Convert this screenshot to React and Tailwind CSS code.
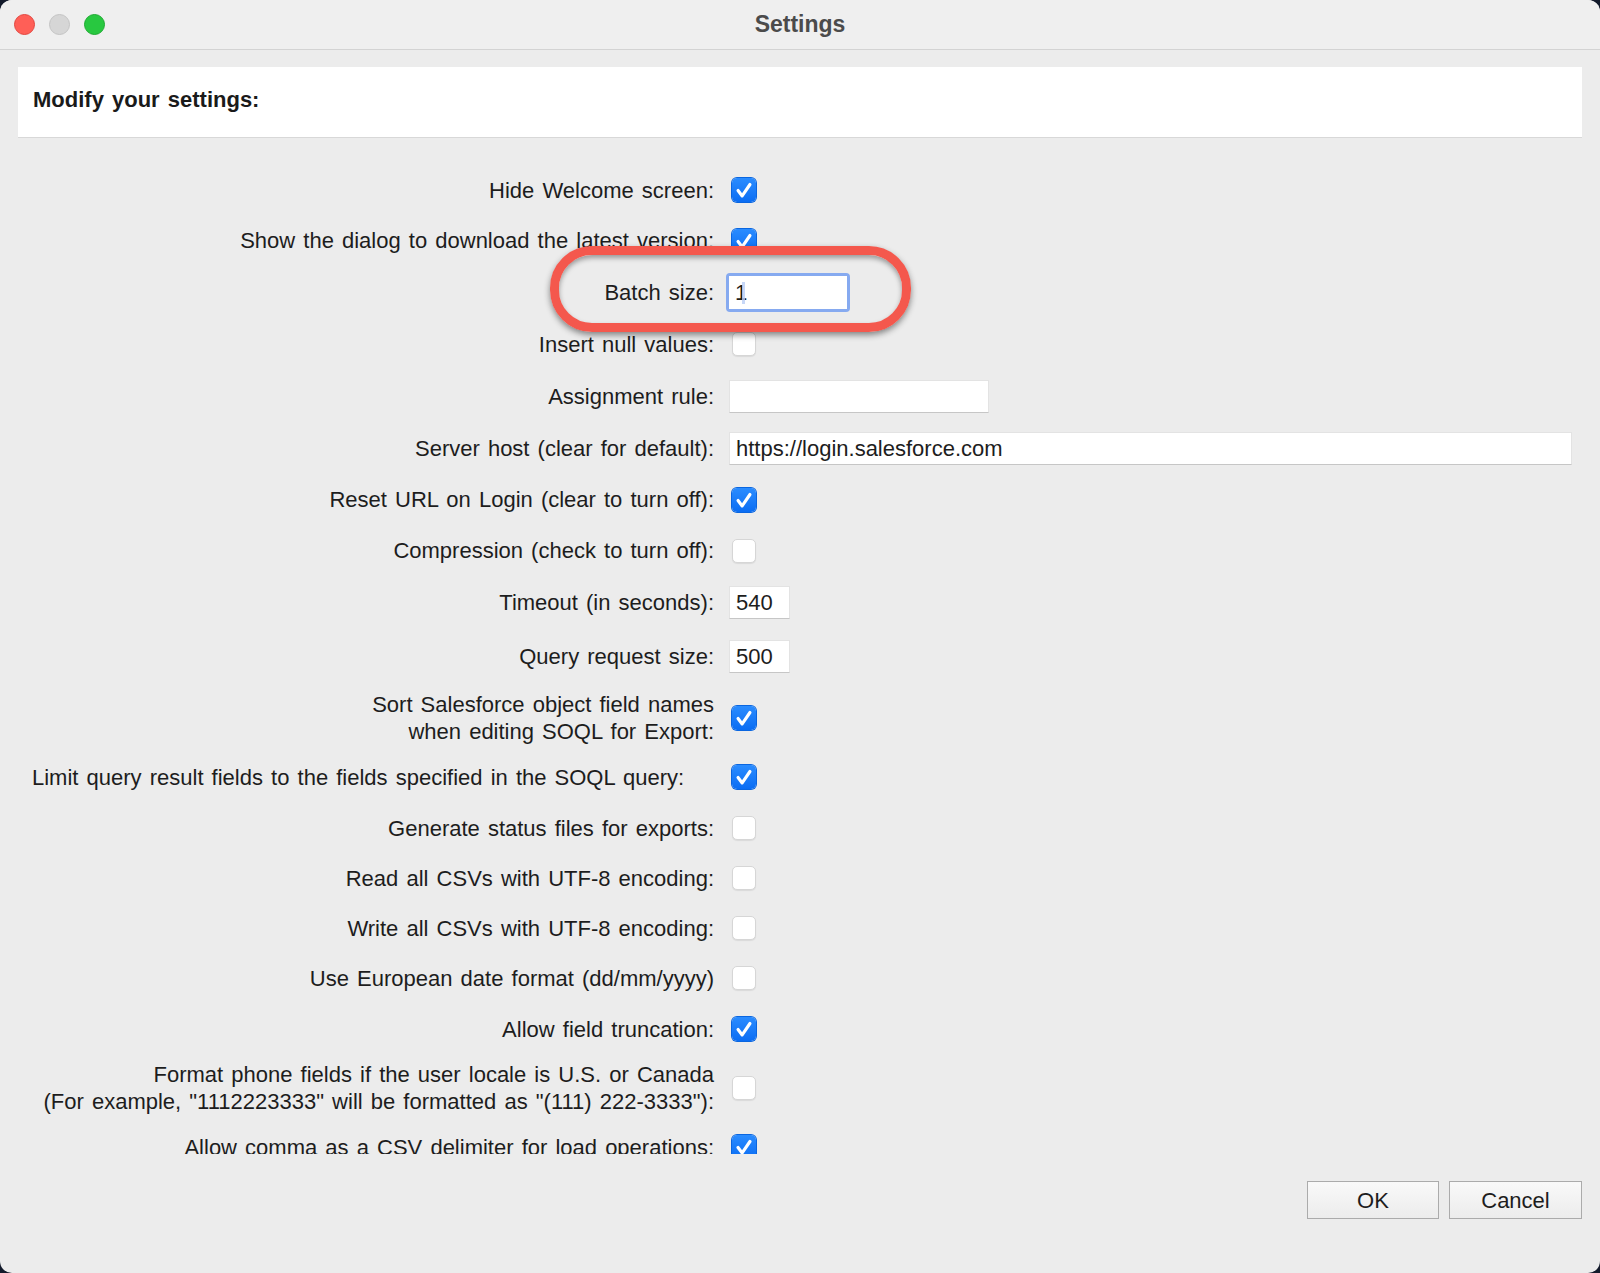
// Settings dialog - macOS style window with a form of options

const rows = [
  { label: 'Hide Welcome screen:', type: 'check', checked: true, h: 'h-[50px]' },
  { label: 'Show the dialog to download the latest version:', type: 'check', checked: true, h: 'h-[51px]' },
  { label: 'Batch size:', type: 'input', value: '1', w: 'w-[118px]', focus: true, h: 'h-[52px]' },
  { label: 'Insert null values:', type: 'check', checked: false, h: 'h-[52px]' },
  { label: 'Assignment rule:', type: 'input', value: '', w: 'w-[260px]', h: 'h-[52px]' },
  { label: 'Server host (clear for default):', type: 'input', value: 'https://login.salesforce.com', w: 'flex-1', h: 'h-[52px]' },
  { label: 'Reset URL on Login (clear to turn off):', type: 'check', checked: true, h: 'h-[51px]' },
  { label: 'Compression (check to turn off):', type: 'check', checked: false, h: 'h-[51px]' },
  { label: 'Timeout (in seconds):', type: 'input', value: '540', w: 'w-[61px]', h: 'h-[52px]' },
  { label: 'Query request size:', type: 'input', value: '500', w: 'w-[61px]', h: 'h-[57px]' },
  { label: ['Sort Salesforce object field names', 'when editing SOQL for Export:'], type: 'check', checked: true, h: 'h-[66px]' },
  { label: 'Limit query result fields to the fields specified in the SOQL query:', type: 'check', checked: true, h: 'h-[52px]', left: true },
  { label: 'Generate status files for exports:', type: 'check', checked: false, h: 'h-[50px]' },
  { label: 'Read all CSVs with UTF-8 encoding:', type: 'check', checked: false, h: 'h-[50px]' },
  { label: 'Write all CSVs with UTF-8 encoding:', type: 'check', checked: false, h: 'h-[50px]' },
  { label: 'Use European date format (dd/mm/yyyy)', type: 'check', checked: false, h: 'h-[50px]' },
  { label: 'Allow field truncation:', type: 'check', checked: true, h: 'h-[52px]' },
  { label: ['Format phone fields if the user locale is U.S. or Canada', '(For example, "1112223333" will be formatted as "(111) 222-3333"):'], type: 'check', checked: false, h: 'h-[66px]' },
  { label: 'Allow comma as a CSV delimiter for load operations:', type: 'check', checked: true, h: 'h-[52px]' },
];

function Checkbox({ checked }) {
  if (checked) {
    return (
      <div className="ml-[3px] w-[24px] h-[24px] rounded-[5px] bg-gradient-to-b from-[#2a8cff] to-[#0a6df3] shadow-[0_0_0_1px_#0a66e0] flex items-center justify-center">
        <svg className="w-[22px] h-[22px]" viewBox="0 0 24 24" fill="none" stroke="white" strokeWidth="3.4" strokeLinecap="round" strokeLinejoin="round">
          <path d="M5.5 12.5l4.5 6 8.5-12.5" />
        </svg>
      </div>
    );
  }
  return (
    <div className="ml-[3px] w-[24px] h-[24px] rounded-[5px] bg-white border border-[#d6d6d6] shadow-[0_1px_1px_rgba(0,0,0,0.08)]" />
  );
}

function TextField({ value, w, focus }) {
  if (focus) {
    return (
      <div className="rounded-[4px] p-[3px] bg-[#86aaf0] -ml-[3px]">
        <div className={`${w} h-[33px] bg-white flex items-center pl-[6px] relative`}>
          <span>{value}</span>
          <span className="absolute left-[13px] top-[6px] w-[3px] h-[22px] bg-[#b9cdf5] opacity-80" />
        </div>
      </div>
    );
  }
  return (
    <div className={`${w} h-[33px] bg-white border border-[#e3e3e3] border-b-[#c6c6c6] flex items-center pl-[6px]`}>
      {value}
    </div>
  );
}

export default function App() {
  return (
    <div className="w-[1600px] h-[1273px] bg-[#131a2b] font-['Liberation_Sans',Arial,sans-serif] text-[22px] text-[#1d1d1d]">
      <div className="relative w-full h-full rounded-[12px] overflow-hidden bg-[#ececec] flex flex-col">
        {/* Title bar */}
        <div className="relative h-[50px] shrink-0 bg-[#efefef] border-b border-[#d3d3d3] flex items-center justify-center">
          <div className="absolute left-[14px] top-[14px] flex gap-[14px]">
            <span className="w-[21px] h-[21px] rounded-full bg-[#ff5f57] border border-[#e2463f]" />
            <span className="w-[21px] h-[21px] rounded-full bg-[#d6d6d6] border border-[#c4c4c4]" />
            <span className="w-[21px] h-[21px] rounded-full bg-[#28c840] border border-[#1eaa31]" />
          </div>
          <span className="font-bold text-[23px] text-[#4b4b4b] [word-spacing:2px]">Settings</span>
        </div>

        {/* Header panel */}
        <div className="mx-[18px] mt-[17px] h-[71px] shrink-0 bg-white border-b border-[#d8d8d8] flex items-center pl-[15px] pb-[6px]">
          <span className="font-bold text-[#1a1a1a] [word-spacing:2px]">Modify your settings:</span>
        </div>

        {/* Settings list */}
        <div className="h-[1016px] shrink-0 overflow-hidden pt-[27px] pl-[32px] pr-[28px] [word-spacing:2px]">
          {rows.map((row, i) => (
            <div key={i} className={`${row.h} flex items-center`}>
              <div className={`w-[682px] shrink-0 flex ${row.left ? 'justify-start' : 'justify-end'} text-right leading-[27px]`}>
                {Array.isArray(row.label) ? (
                  <div>
                    {row.label.map((l, j) => (
                      <div key={j}>{l}</div>
                    ))}
                  </div>
                ) : (
                  <span className="whitespace-nowrap">{row.label}</span>
                )}
              </div>
              <div className="ml-[15px] flex-1 flex items-center">
                {row.type === 'check' ? (
                  <Checkbox checked={row.checked} />
                ) : (
                  <TextField value={row.value} w={row.w} focus={row.focus} />
                )}
              </div>
            </div>
          ))}
        </div>

        {/* Buttons */}
        <div className="flex justify-end gap-[10px] pr-[18px] pt-[27px]">
          <button className="w-[132px] h-[38px] border border-[#ababab] bg-gradient-to-b from-[#f9f9f9] to-[#ececec] text-[22px] text-[#1d1d1d]">
            OK
          </button>
          <button className="w-[133px] h-[38px] border border-[#ababab] bg-gradient-to-b from-[#f9f9f9] to-[#ececec] text-[22px] text-[#1d1d1d]">
            Cancel
          </button>
        </div>

        {/* Red annotation ring around Batch size */}
        <div className="absolute left-[550px] top-[246px] w-[361px] h-[86px] rounded-[42px] border-[9px] border-[#f4584d] shadow-[0_3px_6px_rgba(0,0,0,0.45),inset_0_3px_5px_rgba(0,0,0,0.35)]" />
      </div>
    </div>
  );
}
